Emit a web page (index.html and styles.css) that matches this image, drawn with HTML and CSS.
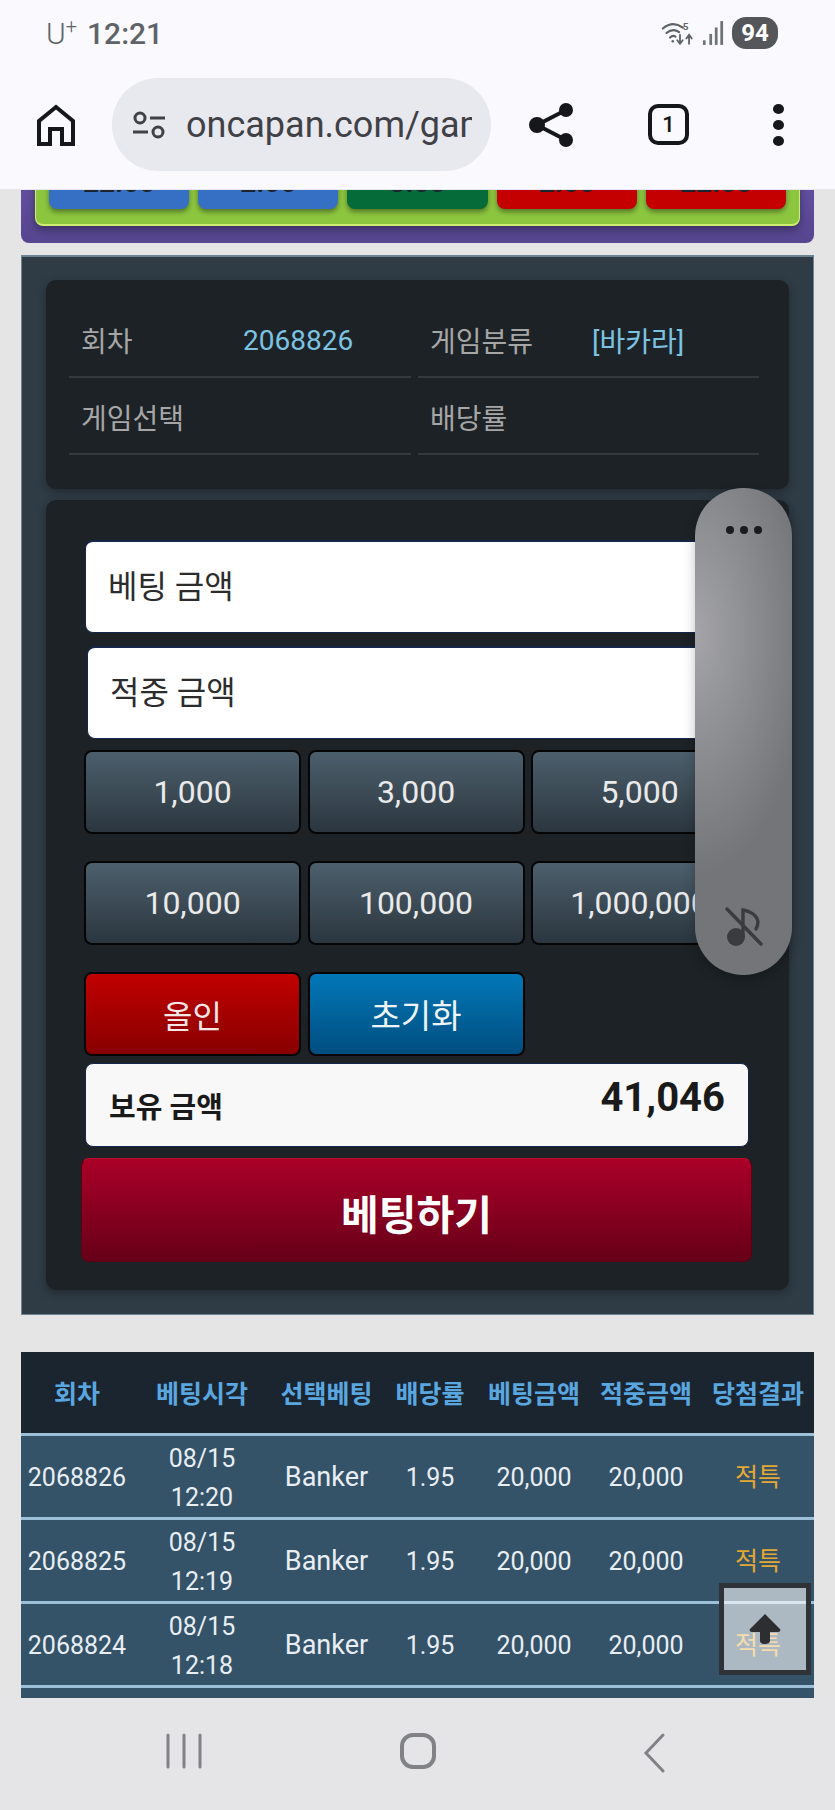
FILE: index.html
```html
<!DOCTYPE html>
<html lang="ko">
<head>
    <meta charset="UTF-8">
    <meta name="viewport" content="width=device-width, initial-scale=1.0">
    <title>oncapan</title>
    <link rel="stylesheet" href="styles.css">
</head>
<body>
<div class="phone">
    <div class="browser">
        <div class="status-bar">
            <div class="status-left"><span class="carrier">U<sup>+</sup></span><span class="clock">12:21</span></div>
            <div class="status-right">
                <svg class="wifi-icon" width="38" height="30" viewBox="0 0 42 30" fill="none" stroke="#5f6368" stroke-width="2.4" stroke-linecap="round">
                    <path d="M2 10 Q13 1 24 9"/>
                    <path d="M6 15 Q13 9 20 14"/>
                    <path d="M10 20 Q13 17 16 19"/>
                    <circle cx="13" cy="24" r="1.4" fill="#5f6368" stroke="none"/>
                    <path d="M21 17v9M18 23l3 4 3-4" stroke-width="2"/>
                    <path d="M31 27v-9M28 21l3-4 3 4" stroke-width="2"/>
                    <text x="24" y="12" class="wifi-five">5</text>
                </svg>
                <svg class="signal-icon" width="22" height="30" viewBox="0 0 24 30" fill="#6f7378">
                    <rect x="1" y="23" width="3" height="5"/>
                    <rect x="8" y="16" width="3" height="12"/>
                    <rect x="14" y="9" width="3" height="19"/>
                    <rect x="20" y="2" width="3" height="26"/>
                </svg>
                <div class="battery">94</div>
            </div>
        </div>
        <div class="toolbar">
            <svg class="home-icon" width="38" height="42" viewBox="0 0 38 42" fill="none" stroke="#16171a" stroke-width="4" stroke-linecap="square">
                <path d="M2 40V17L19 3l17 14v23H25V25H13v15z"/>
            </svg>
            <div class="url-pill">
                <svg width="34" height="28" viewBox="0 0 34 28" fill="none" stroke="#3f4146" stroke-width="3">
                    <circle cx="8" cy="7" r="5"/>
                    <path d="M18 7h15M1 21h15"/>
                    <circle cx="26" cy="21" r="5"/>
                </svg>
                <div class="url-text">oncapan.com/game</div>
            </div>
            <svg class="share-icon" width="44" height="46" viewBox="0 0 44 46" fill="#16171a" stroke="#16171a" stroke-width="4">
                <path d="M37 8L8 23l29 15" fill="none"/>
                <circle cx="37" cy="8" r="5"/>
                <circle cx="8" cy="23" r="6"/>
                <circle cx="37" cy="38" r="5"/>
            </svg>
            <div class="tab-count">1</div>
            <div class="more-dots"><i></i><i></i><i></i></div>
        </div>
    </div>

    <div class="viewport">
        <div class="odds-panel">
            <div class="odds-board">
                <div class="odds-btn blue">22.00</div>
                <div class="odds-btn blue">2.00</div>
                <div class="odds-btn green">3.00</div>
                <div class="odds-btn red">2.00</div>
                <div class="odds-btn red">22.00</div>
            </div>
        </div>

        <div class="bet-panel">
            <div class="card info-card">
                <div class="info-cell"><span class="info-label">회차</span><span class="info-value">2068826</span></div>
                <div class="info-cell"><span class="info-label">게임분류</span><span class="info-value">[바카라]</span></div>
                <div class="info-cell"><span class="info-label">게임선택</span><span class="info-value"></span></div>
                <div class="info-cell"><span class="info-label">배당률</span><span class="info-value"></span></div>
            </div>

            <div class="card form-card">
                <div class="amount-input">베팅 금액</div>
                <div class="amount-input second">적중 금액</div>
                <div class="chip-grid">
                    <div class="chip">1,000</div>
                    <div class="chip">3,000</div>
                    <div class="chip">5,000</div>
                    <div class="chip">10,000</div>
                    <div class="chip">100,000</div>
                    <div class="chip">1,000,000</div>
                    <div class="chip chip-red">올인</div>
                    <div class="chip chip-blue">초기화</div>
                </div>
                <div class="balance">
                    <span class="balance-label">보유 금액</span>
                    <span class="balance-value">41,046</span>
                </div>
                <div class="bet-btn">베팅하기</div>
            </div>
        </div>

        <table class="history">
            <colgroup>
                <col class="w-112"><col class="w-138"><col class="w-111"><col class="w-96"><col class="w-112"><col class="w-112"><col class="w-112">
            </colgroup>
            <thead>
                <tr><th>회차</th><th>베팅시각</th><th>선택베팅</th><th>배당률</th><th>베팅금액</th><th>적중금액</th><th>당첨결과</th></tr>
            </thead>
            <tbody>
                <tr><td>2068826</td><td>08/15<br>12:20</td><td class="pick">Banker</td><td>1.95</td><td>20,000</td><td>20,000</td><td class="result">적특</td></tr>
                <tr><td>2068825</td><td>08/15<br>12:19</td><td class="pick">Banker</td><td>1.95</td><td>20,000</td><td>20,000</td><td class="result">적특</td></tr>
                <tr><td>2068824</td><td>08/15<br>12:18</td><td class="pick">Banker</td><td>1.95</td><td>20,000</td><td>20,000</td><td class="result">적특</td></tr>
                <tr><td>2068823</td><td>08/15<br>12:17</td><td class="pick">Banker</td><td>1.95</td><td>20,000</td><td>20,000</td><td class="result">적특</td></tr>
            </tbody>
        </table>
    </div>

    <div class="nav-bar">
        <svg width="36" height="36" viewBox="0 0 36 36" stroke="#808285" stroke-width="3" stroke-linecap="round">
            <path d="M2 2v32M18 2v32M34 2v32"/>
        </svg>
        <svg width="38" height="36" viewBox="0 0 38 36" fill="none" stroke="#808285" stroke-width="4">
            <rect x="3" y="2" width="32" height="32" rx="11"/>
        </svg>
        <svg width="22" height="40" viewBox="0 0 22 40" fill="none" stroke="#808285" stroke-width="3" stroke-linecap="round">
            <path d="M20 2L3 20l17 18"/>
        </svg>
    </div>

    <div class="side-panel">
        <div class="side-dots"><i></i><i></i><i></i></div>
        <svg class="mute-icon" width="38" height="40" viewBox="0 0 38 40" fill="none" stroke="#3a3b3f" stroke-width="3.4" stroke-linecap="round">
            <circle cx="11" cy="30" r="9" fill="#3a3b3f" stroke="none"/>
            <path d="M18 28V3c7 1 14 5 15 12 0 3-1 5-2 7"/>
            <path d="M2 2l34 35"/>
        </svg>
    </div>

    <div class="to-top">
        <svg width="32" height="30" viewBox="0 0 32 30" fill="#2c2e31">
            <path d="M16 0L31 15c1 1 0 3-2 3h-8v9c0 4-10 4-10 0v-9H3c-2 0-3-2-2-3z"/>
        </svg>
    </div>
</div>
</body>
</html>
```

FILE: styles.css
```css
* {
    margin: 0;
    padding: 0;
    box-sizing: border-box;
}

body {
    background: #e5e5e5;
    font-family: Roboto, "Noto Sans CJK KR", sans-serif;
}

.phone {
    position: relative;
    width: 835px;
    height: 1810px;
    display: flex;
    flex-direction: column;
    overflow: hidden;
}

/* browser chrome */
.browser {
    height: 190px;
    flex-shrink: 0;
    background: #f9f9fe;
    border-bottom: 1px solid #e6e6ee;
}

.status-bar {
    height: 66px;
    display: flex;
    justify-content: space-between;
    align-items: center;
    padding: 0 57px 0 46px;
    color: #5f6368;
}

.status-left {
    display: flex;
    align-items: center;
    gap: 10px;
}

.carrier {
    font-size: 30px;
    font-weight: 300;
}

.carrier sup {
    font-size: 20px;
    line-height: 0;
}

.clock {
    font-size: 30px;
    font-weight: 500;
}

.status-right {
    display: flex;
    align-items: center;
    gap: 3px;
}

.wifi-five {
    font-size: 11px;
    font-weight: 700;
    fill: #5f6368;
    stroke: none;
}

.battery {
    width: 46px;
    height: 32px;
    margin-left: 5px;
    border-radius: 14px;
    background: #55565a;
    color: #fff;
    font-size: 24px;
    font-weight: 700;
    line-height: 32px;
    text-align: center;
}

.toolbar {
    height: 117px;
    padding-left: 37px;
    display: flex;
    align-items: center;
}

.url-pill {
    width: 379px;
    height: 93px;
    margin-left: 37px;
    padding: 0 19px 0 20px;
    border-radius: 46px;
    background: #e8e8ef;
    display: flex;
    align-items: center;
    gap: 20px;
}

.url-pill svg {
    flex-shrink: 0;
}

.url-text {
    flex: 1;
    overflow: hidden;
    white-space: nowrap;
    font-size: 36px;
    color: #3f4146;
}

.share-icon {
    margin-left: 38px;
}

.tab-count {
    width: 41px;
    height: 41px;
    margin-left: 75px;
    border: 4px solid #16171a;
    border-radius: 10px;
    font-size: 22px;
    font-weight: 500;
    line-height: 33px;
    text-align: center;
    color: #16171a;
}

.more-dots {
    margin-left: 84px;
    display: flex;
    flex-direction: column;
    gap: 6px;
}

.more-dots i {
    width: 11px;
    height: 10px;
    border-radius: 50%;
    background: #16171a;
}

/* page area, scrolled part way down */
.viewport {
    height: 1508px;
    flex-shrink: 0;
    padding: 0 21px;
    overflow: hidden;
}

.odds-panel {
    height: 93px;
    margin-top: -40px;
    padding: 0 14px 17px;
    border-radius: 0 0 8px 8px;
    background: linear-gradient(#6a55ab, #56458f);
}

.odds-board {
    height: 76px;
    padding: 0 13px;
    display: flex;
    gap: 9px;
    align-items: flex-end;
    padding-bottom: 15px;
    background: #8cc63f;
    border-bottom: 2px solid #cdee70;
    border-left: 1px solid #cdee70;
    border-right: 1px solid #cdee70;
    border-radius: 0 0 8px 8px;
    box-shadow: 0 4px 8px rgba(0, 0, 0, 0.35);
}

.odds-btn {
    flex: 1;
    height: 60px;
    padding-top: 19px;
    border-radius: 8px;
    font-size: 28px;
    font-weight: 700;
    line-height: 30px;
    text-align: center;
    color: #1c2430;
    box-shadow: 0 3px 5px rgba(0, 0, 0, 0.4);
}

.blue { background: #3670c4; }
.green { background: #056b38; }
.red { background: #c40000; }

.bet-panel {
    margin-top: 12px;
    padding: 23px 24px 24px;
    background: #2f3b45;
    border: 1px solid #6c8391;
    border-top-width: 2px;
}

.card {
    background: #1c2226;
    border-radius: 10px;
    box-shadow: 0 3px 8px rgba(0, 0, 0, 0.3);
}

.info-card {
    height: 209px;
    padding: 21px 30px 0 23px;
    display: grid;
    grid-template-columns: 342px 341px;
    grid-template-rows: 77px 77px;
    column-gap: 7px;
}

.info-cell {
    display: grid;
    grid-template-columns: 162px 1fr;
    align-items: center;
    padding: 3px 0 0 12px;
    border-bottom: 2px solid #32393f;
    font-size: 28px;
}

.info-label {
    color: #a6a6a6;
}

.info-value {
    color: #7cc3e2;
}

.form-card {
    margin-top: 11px;
    height: 790px;
    padding: 40px 0 0 38px;
}

.amount-input {
    width: 662px;
    height: 93px;
    margin-left: 1px;
    padding-left: 22px;
    background: #fff;
    border: 1px solid #16254a;
    border-top-width: 2px;
    border-radius: 8px;
    font-size: 32px;
    line-height: 90px;
    color: #2c2c2c;
}

.amount-input.second {
    margin: 13px 0 11px 3px;
}

.chip-grid {
    width: 664px;
    display: grid;
    grid-template-columns: repeat(3, 217px);
    grid-auto-rows: 84px;
    column-gap: 6.5px;
    row-gap: 27px;
}

.chip {
    border: 2px solid #050505;
    border-radius: 8px;
    background: linear-gradient(#4c5f6c, #2b363f);
    font-size: 32px;
    line-height: 80px;
    text-align: center;
    white-space: nowrap;
    overflow: hidden;
    color: #eaeaea;
}

.chip-grid .chip-red {
    background: linear-gradient(#c10000, #880000);
    color: #f6e6e6;
    line-height: 86px;
}

.chip-grid .chip-blue {
    background: linear-gradient(#0277b7, #004e80);
    color: #eef4f8;
    font-size: 33px;
    line-height: 86px;
}

.balance {
    width: 664px;
    height: 84px;
    margin: 7px 0 11px 1px;
    padding: 0 23px;
    display: flex;
    justify-content: space-between;
    background: #f8f8f8;
    border: 1px solid #16254a;
    border-radius: 8px;
    color: #1a1a1a;
    font-weight: 700;
}

.balance-label {
    font-size: 29px;
    line-height: 88px;
}

.balance-value {
    font-size: 40px;
    line-height: 68px;
}

.bet-btn {
    width: 671px;
    height: 104px;
    margin-left: -3px;
    border: 1px solid #5c0014;
    border-top-color: #b8102c;
    border-radius: 8px;
    background: linear-gradient(#aa0028, #660018);
    font-size: 41px;
    font-weight: 700;
    line-height: 114px;
    text-align: center;
    color: #fff;
}

/* betting history */
.history {
    width: 793px;
    margin-top: 37px;
    table-layout: fixed;
    border-collapse: collapse;
}

.w-112 { width: 112px; }
.w-138 { width: 138px; }
.w-111 { width: 111px; }
.w-96 { width: 96px; }

.history th {
    height: 82px;
    background: #1a2530;
    font-size: 25px;
    font-weight: 700;
    color: #5aa7e0;
    white-space: nowrap;
}

.history td {
    height: 84px;
    padding-top: 3px;
    background: #345268;
    border-top: 3px solid #9cc0d8;
    font-size: 25px;
    line-height: 39px;
    text-align: center;
    color: #e8eef2;
}

.history td.pick {
    font-size: 27px;
}

.history td.result {
    font-size: 25px;
    color: #e3a832;
}

/* android nav */
.nav-bar {
    flex: 1;
    background: #e5e5e7;
    display: grid;
    grid-template-columns: 233px 244px 22px;
    justify-content: start;
    padding: 35px 0 0 166px;
    align-items: start;
}

/* overlays */
.side-panel {
    position: absolute;
    left: 695px;
    top: 488px;
    width: 97px;
    height: 487px;
    padding: 38px 0 28px;
    border-radius: 48px;
    background: radial-gradient(ellipse 130% 55% at 0% 30%, #a5a5a9, #737578 90%);
    box-shadow: 0 4px 12px rgba(0, 0, 0, 0.25);
    display: flex;
    flex-direction: column;
    justify-content: space-between;
    align-items: center;
}

.side-dots {
    display: flex;
    gap: 6px;
}

.side-dots i {
    width: 8px;
    height: 8px;
    border-radius: 50%;
    background: #1a1a1f;
}

.to-top {
    position: absolute;
    left: 719px;
    top: 1583px;
    width: 92px;
    height: 92px;
    border: 5px solid #2f3237;
    background: rgba(255, 255, 255, 0.6);
    display: flex;
    justify-content: center;
    padding-top: 26px;
}
```
